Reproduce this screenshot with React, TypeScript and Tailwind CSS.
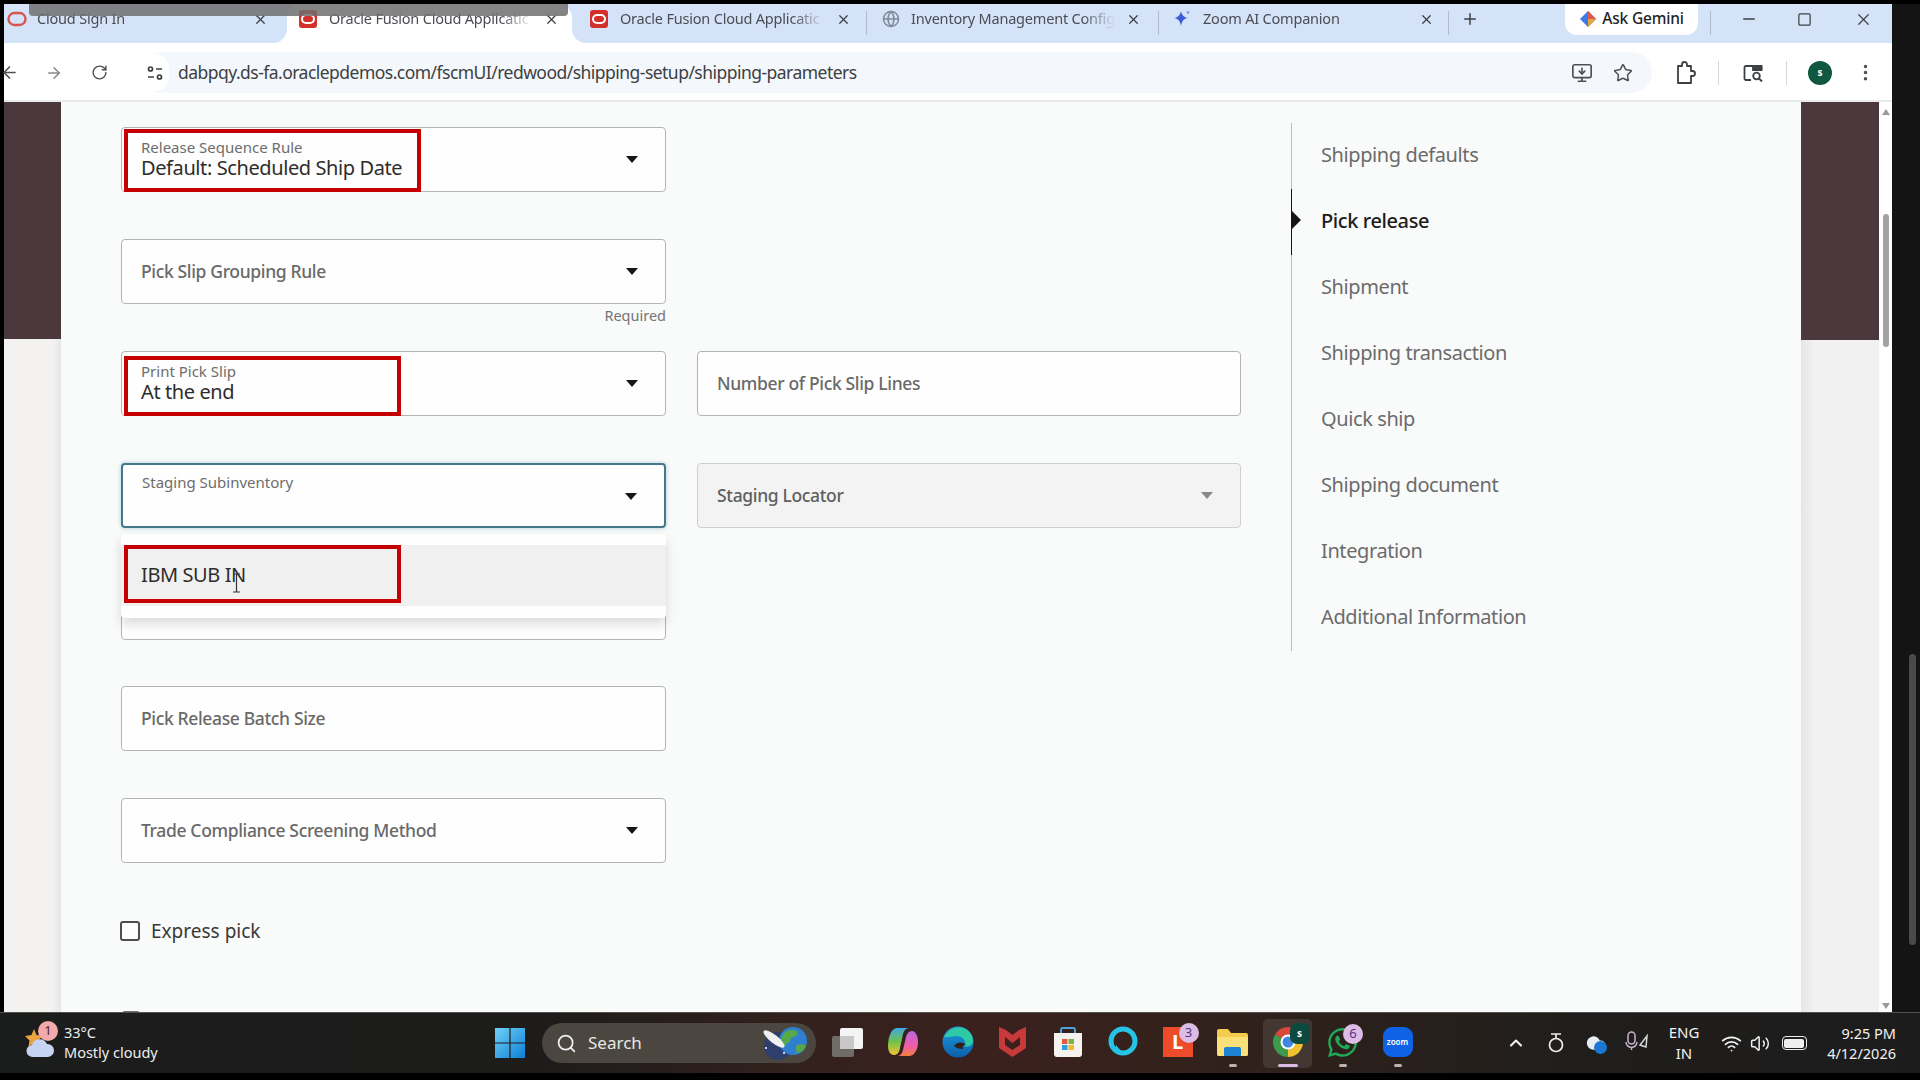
import React from 'react';
import {
  ArrowLeft,
  ArrowRight,
  RotateCw,
  X,
  Plus,
  Minus,
  Square,
  Star,
  EllipsisVertical,
  MonitorDown,
  Search,
  ChevronUp,
  Wifi,
  Volume2,
  Globe,
  Cloud,
} from 'lucide-react';
import { FaWhatsapp } from 'react-icons/fa';

const SANS = 'font-["Noto_Sans",sans-serif]';

const OracleIcon = () => (
  <svg width="20" height="20" viewBox="0 0 20 20" className="shrink-0">
    <rect x="1" y="1" width="18" height="18" rx="3" fill="#d3302a" />
    <rect x="4" y="6" width="12" height="8" rx="4" fill="none" stroke="#fff" strokeWidth="2" />
  </svg>
);

const CloudSignInIcon = () => (
  <svg width="20" height="20" viewBox="0 0 20 20" className="shrink-0">
    <rect x="1.5" y="4" width="17" height="12" rx="6" fill="none" stroke="#d8564f" strokeWidth="2.4" />
  </svg>
);

const SparkIcon = () => (
  <svg width="20" height="20" viewBox="0 0 20 20" className="shrink-0">
    <path d="M9 2c.8 4.200 2.800 6.200 7 7-4.200.8-6.200 2.800-7 8-.8-5.200-2.800-7.200-7-8 4.200-.8 6.200-2.800 7-7z" fill="#3b5bd9" />
    <circle cx="16" cy="3.500" r="1.200" fill="#6d8cf0" />
  </svg>
);

type TabProps = {
  title: string;
  icon: React.ReactNode;
  width: string;
  pad: string;
  active?: boolean;
  outer?: string;
  divider?: boolean;
};

// one chrome tab, the neighbours of the active one get a curved corner
const Tab = ({ title, icon, width, pad, active, outer, divider }: TabProps) => (
  <div className={`${width} h-full ${active ? 'bg-[#d5e3f9]' : outer ? 'bg-white' : ''}`}>
    <div
      className={`relative flex h-full items-center pb-[9px] ${pad} ${
        active ? 'rounded-t-[14px] bg-white' : `bg-[#d5e3f9] ${outer ?? ''}`
      }`}
    >
      {icon}
      <span className="flex-1 overflow-hidden whitespace-nowrap text-[14.500px] tracking-[-0.2px] text-[#4a4d52] [mask-image:linear-gradient(90deg,#000_84%,transparent)]">
        {title}
      </span>
      <X size={15} strokeWidth={2} className="shrink-0 text-[#3c4043]" />
      {divider && <div className="absolute right-0 top-[7px] h-[24px] w-px bg-[#aebbd0]" />}
    </div>
  </div>
);

const TabStrip = () => (
  <div className={`flex h-[39px] shrink-0 items-stretch bg-[#d5e3f9] ${SANS}`}>
    <Tab title="Cloud Sign In" width="w-[283px]" pad="gap-[10px] pl-[3px] pr-[19px]" icon={<CloudSignInIcon />} outer="rounded-br-[14px]" />
    <Tab title="Oracle Fusion Cloud Applicatic" width="w-[285px]" pad="gap-[11px] pl-[11px] pr-[13px]" icon={<OracleIcon />} active />
    <Tab title="Oracle Fusion Cloud Applicatic" width="w-[295px]" pad="gap-[11px] pl-[17px] pr-[16px]" icon={<OracleIcon />} outer="rounded-bl-[14px]" divider />
    <Tab title="Inventory Management Config" width="w-[292px]" pad="gap-[11px] pl-[15px] pr-[18px]" icon={<Globe size={18} className="shrink-0 text-[#7f8a99]" />} divider />
    <Tab title="Zoom AI Companion" width="w-[290px]" pad="gap-[11px] pl-[13px] pr-[15px]" icon={<SparkIcon />} divider />
    <div className="flex w-[41px] items-center justify-center pb-[9px]">
      <Plus size={18} strokeWidth={2} className="text-[#3c4043]" />
    </div>
    <div className="ml-[75px] flex h-[31px] w-[133px] items-center justify-center gap-[5px] rounded-b-[12px] bg-white pb-[1px] text-[15.500px] font-medium tracking-[-0.2px] text-[#1f1f1f]">
      <svg width="18" height="18" viewBox="0 0 18 18">
        <path d="M9 1l8 8-8 8-8-8z" fill="#3f7ae6" />
        <path d="M9 1l8 8-8 0z" fill="#e2574c" />
        <path d="M9 9h8l-8 8z" fill="#e9a23b" />
      </svg>
      Ask Gemini
    </div>
    <div className="ml-[12px] mt-[7px] h-[24px] w-px bg-[#aebbd0]" />
    <div className="flex flex-1 items-center pb-[9px] text-[#3c4043]">
      <div className="ml-[29px] w-[57px]">
        <Minus size={18} />
      </div>
      <div className="w-[57px]">
        <Square size={15} />
      </div>
      <X size={19} strokeWidth={1.500} />
    </div>
  </div>
);

const TuneIcon = () => (
  <svg width="18" height="18" viewBox="0 0 18 18" fill="none" stroke="#3c4043" strokeWidth="1.700">
    <circle cx="4.500" cy="5" r="2" />
    <path d="M10 5h6M2 13h6" />
    <circle cx="13.500" cy="13" r="2" />
  </svg>
);

const SidePanelSearch = () => (
  <svg width="22" height="22" viewBox="0 0 22 22" fill="none" stroke="#3c4043" strokeWidth="1.800">
    <path d="M9 18H4a1.500 1.500 0 0 1-1.500-1.500v-11A1.500 1.500 0 0 1 4 4h14a1.500 1.500 0 0 1 1.500 1.500V8" />
    <path d="M11 4h8.500v4H11z" fill="#3c4043" />
    <circle cx="14.500" cy="14" r="3.300" />
    <path d="M17 16.500l3 3" />
  </svg>
);

// chrome's extensions button: a card with a knob on top and on the right
const ExtensionsIcon = () => (
  <svg width="22" height="24" viewBox="0 0 22 24" fill="none" stroke="#3c4043" strokeWidth="1.800" strokeLinejoin="round">
    <path d="M4 5h4V3.500a2.500 2.500 0 0 1 5 0V5h4v5h1.500a2.500 2.500 0 0 1 0 5H17v7H4z" />
  </svg>
);

const Toolbar = () => (
  <div className="flex h-[59px] shrink-0 items-center border-b-2 border-[#e8eaec] bg-white pt-[2px] text-[#4c5055]">
    <div className="flex w-[137px] items-center">
      <ArrowLeft size={19} className="-ml-[4px]" />
      <ArrowRight size={18} className="ml-[26px] text-[#85898e]" />
      <RotateCw size={17} className="ml-[28px]" />
    </div>
    <div className="flex h-[41px] w-[1511px] items-center rounded-full bg-[#f4f7fb]">
      <div className="flex h-[37px] w-[28px] items-center justify-center rounded-full bg-white">
        <TuneIcon />
      </div>
      <span className={`ml-[9px] text-[17.500px] tracking-[-0.53px] text-[#3c4043] ${SANS}`}>
        dabpqy.ds-fa.oraclepdemos.com/fscmUI/redwood/shipping-setup/shipping-parameters
      </span>
      <div className="ml-auto mr-[19px] flex items-center gap-[20px]">
        <MonitorDown size={22} strokeWidth={1.800} />
        <Star size={20} strokeWidth={1.800} />
      </div>
    </div>
    <div className="ml-[22px]">
      <ExtensionsIcon />
    </div>
    <div className="ml-[22px] h-[24px] w-px bg-[#d5d7da]" />
    <div className="ml-[23px]">
      <SidePanelSearch />
    </div>
    <div className="ml-[22px] h-[24px] w-px bg-[#d5d7da]" />
    <div className={`ml-[21px] flex h-[24px] w-[24px] items-center justify-center rounded-full bg-[#10583f] text-[10px] font-bold text-white ${SANS}`}>
      s
    </div>
    <EllipsisVertical size={21} className="ml-[23px]" />
  </div>
);

const Caret = ({ muted }: { muted?: boolean }) => (
  <svg width="12" height="7" viewBox="0 0 12 7" className="absolute right-[27px] top-[28px]">
    <path d="M0 0h12L6 7z" fill={muted ? '#8a8a8a' : '#161513'} />
  </svg>
);

type FieldProps = {
  label: string;
  value?: string;
  caret?: boolean;
  floated?: boolean;
  focused?: boolean;
  disabled?: boolean;
  children?: React.ReactNode;
};

const Field = ({ label, value, caret, floated, focused, disabled, children }: FieldProps) => (
  <div
    className={`relative flex h-[65px] flex-col justify-center rounded-[4px] pb-[1px] pl-[19px] ${
      focused
        ? 'border-2 border-[#44788a] bg-[#fefefe] shadow-[0_0_4px_#a8ccd6]'
        : disabled
          ? 'border border-[#cfcfcf] bg-[#f3f3f3]'
          : 'border border-[#b4b4b4] bg-[#fefefe]'
    }`}
  >
    {value || floated ? (
      <div className={`${floated && !value ? 'mb-[26px]' : ''}`}>
        <div className="text-[15px] leading-[18px] text-[#6d6d6d]">{label}</div>
        {value && <div className="text-[20px] leading-[24px] tracking-[-0.4px] text-[#2e2d2b]">{value}</div>}
      </div>
    ) : (
      <div className={`text-[17.500px] font-medium tracking-[-0.35px] ${disabled ? 'text-[#5f5f5f]' : 'text-[#696969]'}`}>{label}</div>
    )}
    {caret && <Caret muted={disabled} />}
    {children}
  </div>
);

const RedBox = ({ className }: { className: string }) => (
  <div className={`pointer-events-none absolute border-[4px] border-[#c60000] ${className}`} />
);

const TextCursor = () => (
  <svg width="9" height="20" viewBox="0 0 9 20" fill="none" stroke="#333" strokeWidth="1.200" className="absolute left-[111px] top-[28px]">
    <path d="M1 1h7M4.500 1v18M1 19h7" />
  </svg>
);

const FormArea = () => (
  <div className={`ml-[60px] mt-[25px] w-[1120px] ${SANS}`}>
    <div className="grid grid-cols-[545px_544px] gap-x-[31px] gap-y-[46.900px]">
      <Field label="Release Sequence Rule" value="Default: Scheduled Ship Date" caret>
        <RedBox className="left-[2px] top-[1px] h-[63px] w-[297px]" />
      </Field>
      <div />

      <div className="h-[65px]">
        <Field label="Pick Slip Grouping Rule" caret />
        <div className="mt-[1px] text-right text-[14.500px] text-[#757575]">Required</div>
      </div>
      <div />

      <Field label="Print Pick Slip" value="At the end" caret>
        <RedBox className="left-[2px] top-[4px] h-[60px] w-[277px]" />
      </Field>
      <Field label="Number of Pick Slip Lines" />

      <div className="relative z-10">
        <Field label="Staging Subinventory" caret floated focused />
        <div className="absolute left-0 right-0 top-[71px] h-[84px] rounded-[4px] bg-[#fefefe] pt-[11px] shadow-[0_6px_12px_rgba(0,0,0,0.14)]">
          <div className="relative flex h-[61px] items-center bg-[#f0f0f0] pl-[20px] text-[20px] tracking-[-0.4px] text-[#2e2d2b]">
            IBM SUB IN
            <RedBox className="left-[3px] top-0 h-[58px] w-[277px]" />
            <TextCursor />
          </div>
        </div>
      </div>
      <Field label="Staging Locator" caret disabled />

      <Field label="" />
      <div />

      <Field label="Pick Release Batch Size" />
      <div />

      <Field label="Trade Compliance Screening Method" caret />
      <div />
    </div>

    <div className="-ml-px mt-[58px] flex h-[20px] items-center gap-[11px] text-[19px] text-[#3a3937]">
      <div className="h-[20px] w-[20px] rounded-[3px] border-2 border-[#4f4e4c] bg-[#fdfdfd]" />
      Express pick
    </div>
    <div className="ml-px mt-[70px] h-[18px] w-[18px] rounded-[3px] border-2 border-[#6b6b6b]" />
  </div>
);

const NAV_ITEMS = [
  'Shipping defaults',
  'Pick release',
  'Shipment',
  'Shipping transaction',
  'Quick ship',
  'Shipping document',
  'Integration',
  'Additional Information',
];

const SideNav = () => (
  <div className={`ml-[50px] mt-[21px] h-[528px] w-[320px] border-l border-[#bdbdbd] ${SANS}`}>
    {NAV_ITEMS.map(item => {
      const active = item === 'Pick release';
      return (
        <div
          key={item}
          className={`relative -ml-px flex h-[66px] items-center border-l pb-[3px] pl-[29px] text-[20px] tracking-[-0.4px] ${
            active ? 'border-[#161513] font-medium text-[#1d1c1a]' : 'border-transparent text-[#6b6b6b]'
          }`}
        >
          {active && (
            <svg width="10" height="18" viewBox="0 0 10 18" className="absolute left-0 top-[22px]">
              <path d="M0 0l9 9-9 9z" fill="#161513" />
            </svg>
          )}
          {item}
        </div>
      );
    })}
  </div>
);

const PageScrollbar = () => (
  <div className="flex w-[13px] shrink-0 flex-col items-center bg-white">
    <svg width="8" height="6" viewBox="0 0 8 6" className="mt-[7px]">
      <path d="M4 0l4 6H0z" fill="#9a9a9a" />
    </svg>
    <div className="mt-[99px] h-[133px] w-[6px] rounded-full bg-[#a3a3a3]" />
    <svg width="8" height="6" viewBox="0 0 8 6" className="mt-auto mb-[3px]">
      <path d="M0 0h8L4 6z" fill="#9a9a9a" />
    </svg>
  </div>
);

const Page = () => (
  <div className="flex min-h-0 flex-1 overflow-hidden">
    <div className="flex w-[57px] shrink-0 flex-col bg-[linear-gradient(90deg,#f3f2f1_85%,#e6e6e6)]">
      <div className="h-[237px] bg-[#4a383c]" />
    </div>
    <div className="flex w-[1740px] shrink-0 bg-[#f9fafa]">
      <FormArea />
      <SideNav />
    </div>
    <div className="flex w-[78px] shrink-0 flex-col bg-[linear-gradient(90deg,#e6e6e6,#f2f1f1_16%)]">
      <div className="h-[238px] bg-[#4a383c]" />
    </div>
    <PageScrollbar />
  </div>
);

const WindowsLogo = () => (
  <svg width="30" height="30" viewBox="0 0 30 30">
    <defs>
      <linearGradient id="win" x1="0" y1="0" x2="1" y2="1">
        <stop offset="0" stopColor="#6fd0f7" />
        <stop offset="1" stopColor="#0f7fd6" />
      </linearGradient>
    </defs>
    <path d="M0 0h14.400v14.400H0zM15.600 0H30v14.400H15.600zM0 15.600h14.400V30H0zM15.600 15.600H30V30H15.600z" fill="url(#win)" />
  </svg>
);

const RocketGlobe = () => (
  <svg width="50" height="34" viewBox="0 0 50 34">
    <circle cx="18" cy="20" r="14" fill="#1f3a86" opacity="0.65" />
    <circle cx="33" cy="15" r="14" fill="#2f7fd1" />
    <path d="M24 7c5-4 10-3 13-2 2 3-1 6-4 6s-2 5-5 6-3 5-6 2-1-8 2-12zM37 19c4-2 7-1 9 1-2 5-6 7-9 7-1-3-2-6 0-8z" fill="#56a84a" />
    <ellipse cx="14" cy="13" rx="13" ry="4" transform="rotate(38 14 13)" fill="#eef0f2" />
    <circle cx="6" cy="22" r="1" fill="#fff" />
    <circle cx="24" cy="27" r="1" fill="#fff" />
  </svg>
);

const TaskView = () => (
  <svg width="31" height="29" viewBox="0 0 31 29">
    <rect x="0" y="8" width="22" height="21" rx="2" fill="#6f6b66" />
    <rect x="8" y="0" width="23" height="21" rx="2" fill="#f4f4f4" />
    <rect x="8" y="8" width="14" height="13" fill="#c9c8c6" />
  </svg>
);

const Copilot = () => (
  <svg width="30" height="30" viewBox="0 0 30 30">
    <defs>
      <linearGradient id="cop1" x1="0" y1="0" x2="0" y2="1">
        <stop offset="0" stopColor="#3fa7e8" />
        <stop offset="0.5" stopColor="#6dc24b" />
        <stop offset="1" stopColor="#f4c233" />
      </linearGradient>
      <linearGradient id="cop2" x1="0" y1="0" x2="0" y2="1">
        <stop offset="0" stopColor="#b768e0" />
        <stop offset="0.6" stopColor="#ef5da8" />
        <stop offset="1" stopColor="#f47f3c" />
      </linearGradient>
    </defs>
    <path d="M21 29H9c3 0 5-2 6-6l3-13c1-4 3-6 6-6 4 0 6 6 6 11 0 8-4 14-9 14z" fill="url(#cop2)" />
    <path d="M9 1h12c-3 0-5 2-6 6l-3 14c-1 5-3 7-6 7-4 0-6-4-6-9C0 11 3 1 9 1z" fill="url(#cop1)" />
    <path d="M13 20l4-13" stroke="#3a211c" strokeWidth="1.200" />
  </svg>
);

const Edge = () => (
  <svg width="32" height="32" viewBox="0 0 32 32">
    <defs>
      <linearGradient id="edge" x1="0" y1="0" x2="0" y2="1">
        <stop offset="0" stopColor="#1b9ddb" />
        <stop offset="1" stopColor="#0d5fae" />
      </linearGradient>
    </defs>
    <circle cx="16" cy="16" r="15.500" fill="url(#edge)" />
    <path d="M2 11C6 3 14 0 21 2c6 2 10 7 10 13 0 4-5 7-9 5 3-4-1-10-7-10-5 0-10 2-13 1z" fill="#2fc9a5" />
    <path d="M12 20c2-4 9-5 12-1-3 0-4 2-3 4-4 0-7-1-9-3z" fill="#33211d" />
  </svg>
);

const McAfee = () => (
  <svg width="27" height="30" viewBox="0 0 27 30">
    <path d="M0 0l7 3 6.500 5L20 3l7-3v21l-13.500 9L0 21z" fill="#c63a3a" />
    <path d="M6 10l7.500 6L21 10v8l-7.500 5L6 18z" fill="#3a211c" />
  </svg>
);

const StoreBag = () => (
  <svg width="30" height="31" viewBox="0 0 30 31">
    <path d="M8 7V3a2 2 0 0 1 2-2h10a2 2 0 0 1 2 2v4" fill="none" stroke="#4da3d8" strokeWidth="2" />
    <path d="M1 6h28v21a3 3 0 0 1-3 3H4a3 3 0 0 1-3-3z" fill="#f5f3ef" />
    <path d="M9 12h5.500v5H9z" fill="#e25b3c" />
    <path d="M15.500 12H21v5h-5.500z" fill="#7cb342" />
    <path d="M9 18h5.500v5H9z" fill="#2b9fe0" />
    <path d="M15.500 18H21v5h-5.500z" fill="#f4b92d" />
  </svg>
);

const Alexa = () => (
  <svg width="32" height="32" viewBox="0 0 32 32">
    <circle cx="16" cy="15" r="12" fill="none" stroke="#27c3e6" strokeWidth="5" />
    <path d="M8 25l1-6 6 7z" fill="#27c3e6" />
  </svg>
);

const Chrome = () => (
  <svg width="32" height="32" viewBox="0 0 32 32">
    <path d="M16 16L3 8.500A15 15 0 0 1 29 8.500Z" fill="#d9463a" />
    <path d="M16 16L29 8.500A15 15 0 0 1 16 31Z" fill="#efc02f" />
    <path d="M16 16L16 31A15 15 0 0 1 3 8.500Z" fill="#3d9a4b" />
    <circle cx="16" cy="16" r="7.500" fill="#fff" />
    <circle cx="16" cy="16" r="5.500" fill="#3f86e0" />
  </svg>
);

const Folder = () => (
  <svg width="31" height="27" viewBox="0 0 31 27">
    <path d="M0 2a2 2 0 0 1 2-2h9l3 4h15a2 2 0 0 1 2 2v19a2 2 0 0 1-2 2H2a2 2 0 0 1-2-2z" fill="#f2cb4f" />
    <path d="M0 8h31v17a2 2 0 0 1-2 2H2a2 2 0 0 1-2-2z" fill="#fbe07a" />
    <path d="M7 20a2 2 0 0 1 2-2h13a2 2 0 0 1 2 2v7H7z" fill="#1f83d4" />
  </svg>
);

type SlotProps = { children: React.ReactNode; dot?: boolean; active?: boolean };

const Slot = ({ children, dot, active }: SlotProps) => (
  <div className="relative flex h-full w-[55px] shrink-0 items-center justify-center pb-[2px]">
    {active && <div className="absolute inset-x-[3px] top-[6px] bottom-[5px] rounded-[5px] bg-white/10" />}
    <div className="relative flex items-center justify-center">{children}</div>
    {dot && <div className="absolute bottom-[6px] h-[3px] w-[8px] rounded-full bg-[#b9b4ae]" />}
    {active && <div className="absolute bottom-[6px] h-[3px] w-[20px] rounded-full bg-[#dcbce4]" />}
  </div>
);

const TrayCell = ({ width, children }: { width: string; children: React.ReactNode }) => (
  <div className={`flex ${width} shrink-0 items-center justify-center`}>{children}</div>
);

const Taskbar = () => (
  <div className={`flex h-[61px] shrink-0 items-stretch border-t border-[#55504c] bg-[linear-gradient(90deg,#1b1c1c_0%,#1d1c1b_28%,#33211d_42%,#3b211e_52%,#2f211b_66%,#201e1c_82%,#1c1c1c_100%)] text-[#eeeeee] ${SANS}`}>
    <div className="relative flex w-[483px] shrink-0 items-center pl-[24px]">
      <svg width="32" height="32" viewBox="0 0 32 32">
        <path d="M10 2l2.500 6 6 1-4.500 4.500 1 6-5-3-5.500 3 1-6L1 9l6.500-1z" fill="#eca23f" />
        <path d="M9 30a6 6 0 0 1-1-12 8 8 0 0 1 15-1 6.500 6.500 0 0 1 1 13z" fill="#c7d3f2" />
      </svg>
      <div className="absolute left-[38px] top-[8px] flex h-[20px] w-[20px] items-center justify-center rounded-full bg-[#f2a9a9] text-[13px] text-[#5a1d1d]">
        1
      </div>
      <div className="ml-[8px] pb-[2px] text-[14.500px] leading-[20px]">
        <div>33°C</div>
        <div>Mostly cloudy</div>
      </div>
    </div>
    <div className="flex w-[54px] shrink-0 items-center justify-center">
      <WindowsLogo />
    </div>
    <div className="my-auto ml-[5px] flex h-[40px] w-[274px] shrink-0 items-center rounded-full bg-[#4b4740] pl-[14px] pr-[6px]">
      <Search size={21} strokeWidth={2} />
      <span className="ml-[11px] text-[17px] text-[#e6e6e6]">Search</span>
      <div className="ml-auto">
        <RocketGlobe />
      </div>
    </div>
    <div className="ml-[4px] flex items-stretch">
      <Slot><TaskView /></Slot>
      <Slot><Copilot /></Slot>
      <Slot><Edge /></Slot>
      <Slot><McAfee /></Slot>
      <Slot><StoreBag /></Slot>
      <Slot><Alexa /></Slot>
      <Slot>
        <div className="flex h-[30px] w-[30px] items-center justify-center bg-[#ee4b2b] text-[20px] font-bold text-white">L</div>
        <div className="absolute -right-[6px] -top-[4px] flex h-[20px] w-[20px] items-center justify-center rounded-full bg-[#dcbce4] text-[13px] text-[#56308a]">3</div>
      </Slot>
      <Slot dot><Folder /></Slot>
      <Slot active>
        <Chrome />
        <div className="absolute -right-[6px] -top-[3px] flex h-[21px] w-[20px] items-center justify-center rounded-[7px] bg-[#0c4a3e] text-[10px] font-bold text-white">s</div>
      </Slot>
      <Slot dot>
        <FaWhatsapp size={33} className="text-[#1fa855]" />
        <div className="absolute -right-[4px] -top-[2px] flex h-[20px] w-[20px] items-center justify-center rounded-full bg-[#dcbce4] text-[13px] text-[#56308a]">6</div>
      </Slot>
      <Slot dot>
        <div className="flex h-[30px] w-[30px] items-center justify-center rounded-[9px] bg-[#0f62e6] text-[8px] font-semibold text-white">zoom</div>
      </Slot>
    </div>
    <div className="ml-[71px] flex items-center text-[#f2f2f2]">
      <TrayCell width="w-[40px]"><ChevronUp size={20} strokeWidth={2.500} /></TrayCell>
      <TrayCell width="w-[40px]">
        <svg width="16" height="24" viewBox="0 0 16 24" fill="none" stroke="#eeeeee" strokeWidth="1.700">
          <circle cx="8" cy="14" r="6.500" />
          <path d="M3 3h10M8 3v5" />
        </svg>
      </TrayCell>
      <TrayCell width="w-[40px]">
        <div className="relative">
          <Cloud size={20} fill="#e8edf3" stroke="#e8edf3" />
          <div className="absolute left-[8px] top-[8px] h-[13px] w-[13px] rounded-full bg-[#1a78d2]" />
        </div>
      </TrayCell>
      <TrayCell width="w-[40px]">
        <svg width="26" height="26" viewBox="0 0 26 26" fill="none" stroke="#c9b3d1" strokeWidth="1.500">
          <rect x="5" y="2" width="7" height="12" rx="3.500" />
          <path d="M3 12a5.500 5.500 0 0 0 11 0M8.500 17v3" />
          <path d="M24 6l-7 9 6 2z" stroke="#d8d8d8" />
        </svg>
      </TrayCell>
      <div className="flex w-[56px] shrink-0 flex-col items-center text-[15px] leading-[21px]">
        <div>ENG</div>
        <div>IN</div>
      </div>
      <TrayCell width="w-[38px]"><Wifi size={21} strokeWidth={2} /></TrayCell>
      <TrayCell width="w-[20px]"><Volume2 size={21} strokeWidth={1.800} /></TrayCell>
      <TrayCell width="w-[48px]">
        <div className="flex h-[14px] w-[25px] items-center rounded-[4px] border border-[#eeeeee] p-[1.500px]">
          <div className="h-full w-full rounded-[2px] bg-[#eeeeee]" />
        </div>
      </TrayCell>
      <div className="w-[78px] shrink-0 text-right text-[14.500px] leading-[20px]">
        <div>9:25 PM</div>
        <div>4/12/2026</div>
      </div>
    </div>
  </div>
);

const App = () => (
  <div className="relative flex h-[1080px] w-[1920px] flex-col overflow-hidden bg-black">
    <div className="h-[4px] shrink-0 bg-black" />
    <div className="flex min-h-0 flex-1">
      <div className="w-[4px] shrink-0 bg-black" />
      <div className="flex w-[1888px] shrink-0 flex-col">
        <TabStrip />
        <Toolbar />
        <Page />
      </div>
      <div className="w-[28px] shrink-0 bg-[#141414] pl-[17px] pt-[650px]">
        <div className="h-[291px] w-[7px] rounded-full bg-[#4a4a4a]" />
      </div>
    </div>
    <Taskbar />
    <div className="h-[7px] shrink-0 bg-black" />
    {/* smear from the video capture over the top of the tabs */}
    <div className="absolute left-[29px] top-[4px] h-[12px] w-[539px] rounded-b-[4px] bg-[#6f6f6f]/85" />
  </div>
);

export default App;
